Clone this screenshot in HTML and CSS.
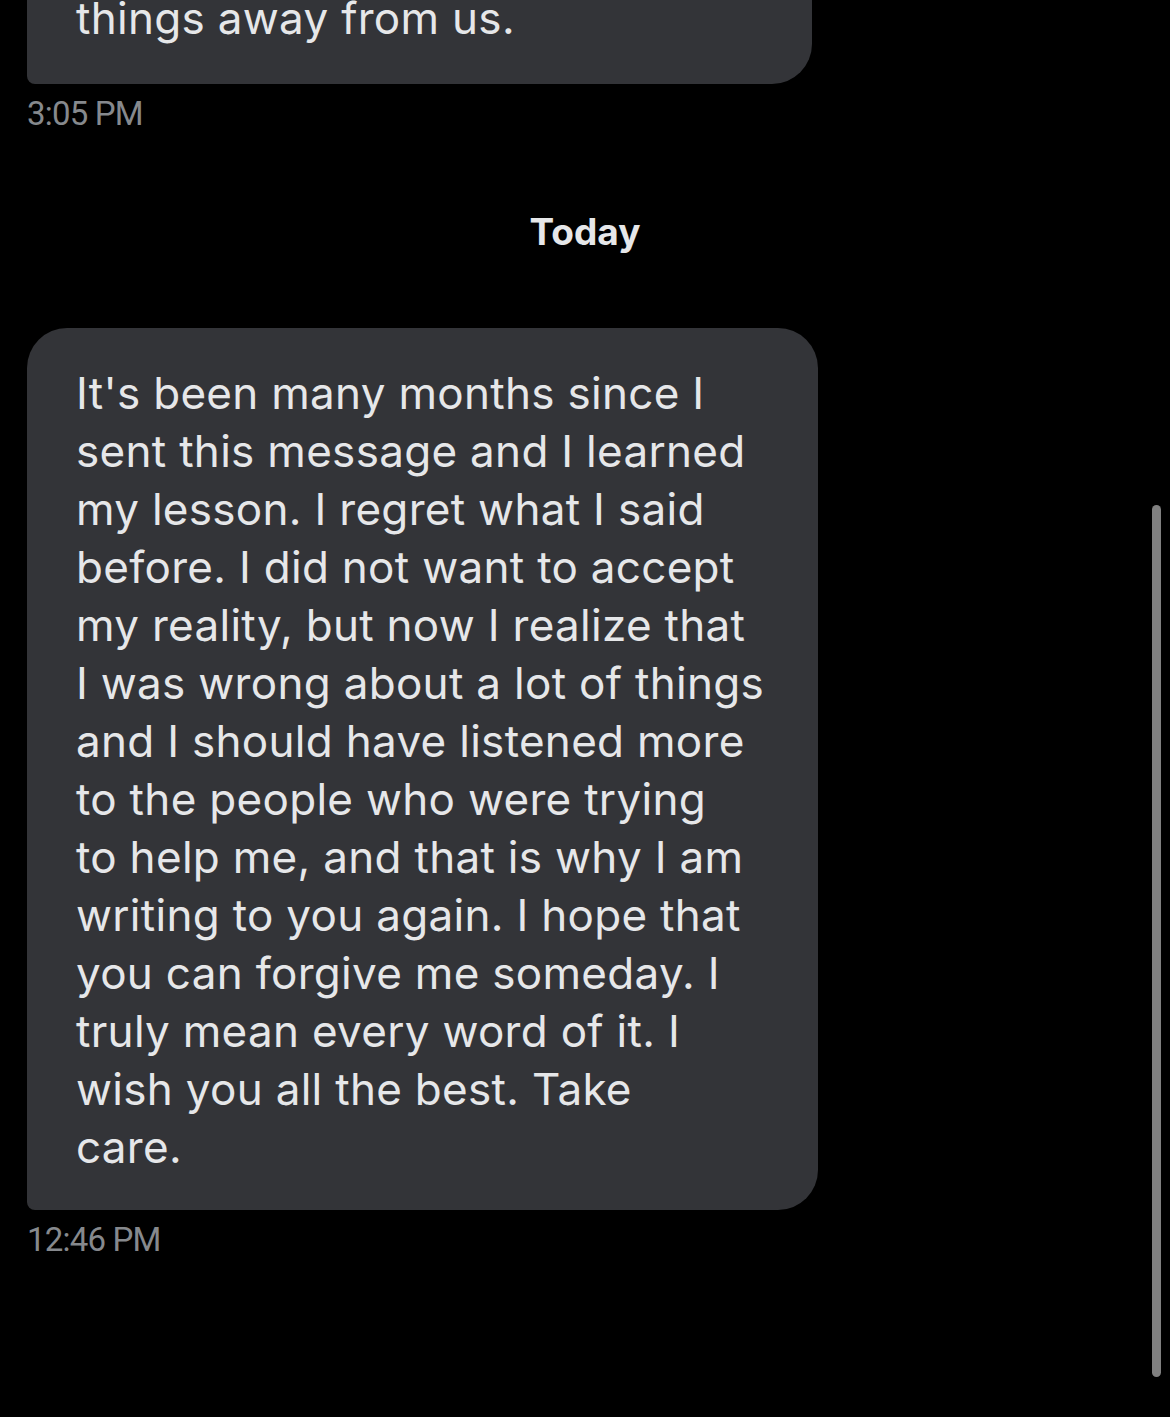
FILE: index.html
```html
<!DOCTYPE html>
<html lang="en">
<head>
<meta charset="utf-8">
<title>Messages</title>
<link rel="stylesheet" href="styles.css">
</head>
<body>
<main class="thread">
  <div class="msg">
    <div class="bubble bubble-first">things away from us.</div>
    <div class="time">3:05 PM</div>
  </div>
  <div class="day">Today</div>
  <div class="msg">
    <div class="bubble bubble-second">It's been many months since I<br>sent this message and I learned<br>my lesson. I regret what I said<br>before. I did not want to accept<br>my reality, but now I realize that<br>I was wrong about a lot of things<br>and I should have listened more<br>to the people who were trying<br>to help me, and that is why I am<br>writing to you again. I hope that<br>you can forgive me someday. I<br>truly mean every word of it. I<br>wish you all the best. Take<br>care.</div>
    <div class="time">12:46 PM</div>
  </div>
  <div class="scrollbar"></div>
</main>
</body>
</html>
```
FILE: styles.css
```css
html, body {
  margin: 0;
  padding: 0;
  background: #000;
}
body {
  width: 1170px;
  height: 1417px;
  overflow: hidden;
  font-family: Inter, "Noto Sans", sans-serif;
}
.thread {
  position: relative;
  height: 1417px;
  padding: 0 27px;
  box-sizing: border-box;
}
.msg {
  display: flex;
  flex-direction: column;
  align-items: flex-start;
}
.bubble {
  background: #333438;
  color: #e6e7e9;
  font-size: 44px;
  line-height: 58px;
  letter-spacing: 0.3px;
  padding: 36px 40px 34px 49px;
  border-radius: 40px 40px 40px 8px;
  white-space: nowrap;
}
.bubble-first {
  width: 785px;
  box-sizing: border-box;
  margin-top: -60px;
  padding-top: 49px;
  padding-bottom: 37px;
}
.bubble-second {
  width: 791px;
  box-sizing: border-box;
}
.time {
  margin-top: 11px;
  font-family: Roboto, "Liberation Sans", sans-serif;
  font-size: 33px;
  line-height: 38px;
  letter-spacing: -0.8px;
  color: #86898d;
}
.day {
  margin-top: 78px;
  margin-bottom: 75px;
  text-align: center;
  font-family: Inter, "Noto Sans", sans-serif;
  font-weight: 700;
  font-size: 37px;
  line-height: 42px;
  color: #e6e7e9;
}
.scrollbar {
  position: absolute;
  left: 1152px;
  top: 505px;
  width: 9px;
  height: 872px;
  border-radius: 5px;
  background: #808080;
}
```
